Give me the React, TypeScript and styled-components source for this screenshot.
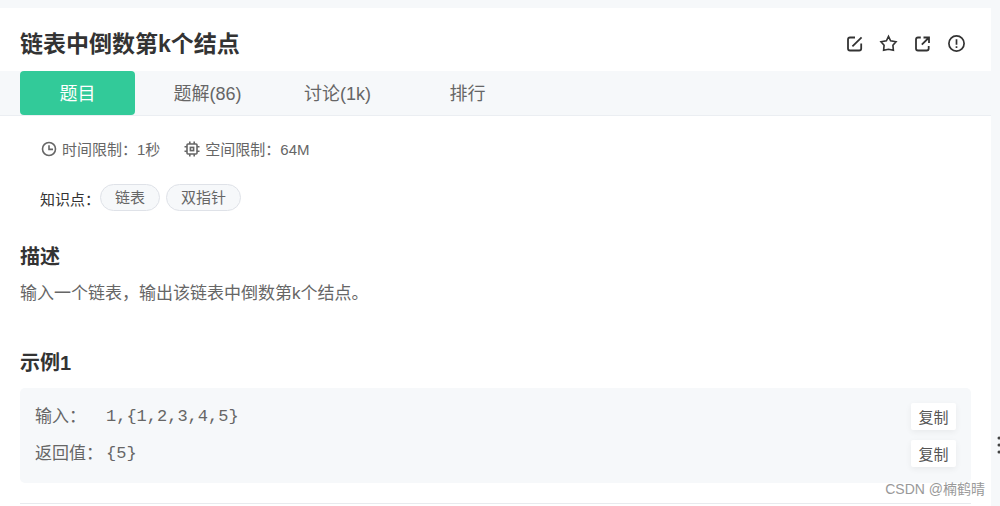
import React from "react";
import styled, { createGlobalStyle } from "styled-components";

const Global = createGlobalStyle`
  * { box-sizing: border-box; }
  body {
    margin: 0;
    background: #f6f8fa;
    color: #333;
    font-family: "Liberation Sans", "Noto Sans CJK SC", sans-serif;
  }
  button { font-family: inherit; cursor: pointer; }
`;

const Page = styled.div`
  display: flex;
  position: relative;
  min-height: 100vh;
  padding-top: 8px;
  overflow: hidden;
`;

const Panel = styled.main`
  flex: 1;
  min-width: 0;
  background: #fff;
`;

const Splitter = styled.div`
  width: 9px;
  padding: 427px 0 0 6px;
  overflow: hidden;
`;

const Dots = styled.svg`
  display: block;
`;

const Header = styled.header`
  display: flex;
  align-items: center;
  justify-content: space-between;
  height: 63px;
  padding: 9px 24px 0 20px;
`;

const Title = styled.h1`
  margin: 0;
  font-size: 23px;
  line-height: 32px;
  font-weight: 700;
`;

const Actions = styled.div`
  display: flex;
  gap: 14px;
`;

const IconButton = styled.button`
  display: flex;
  padding: 0;
  border: 0;
  background: none;
  color: #333;
`;

const Tabs = styled.nav`
  display: flex;
  gap: 15px;
  padding: 0 20px;
  background: #f6f8fa;
  border-bottom: 1px solid #ebeef2;
`;

const Tab = styled.button<{ $active?: boolean }>`
  width: 115px;
  height: 44px;
  padding: 1px 0 0;
  border: 0;
  border-radius: 4px;
  font-size: 18px;
  line-height: 24px;
  background: ${(p) => (p.$active ? "#32ca99" : "transparent")};
  color: ${(p) => (p.$active ? "#fff" : "#666")};
`;

const Content = styled.div`
  padding: 20px 20px 0;
`;

const Limits = styled.div`
  display: flex;
  gap: 23px;
  padding-left: 20px;
  font-size: 15px;
  line-height: 28px;
  color: #666;
`;

const Limit = styled.span`
  display: flex;
  gap: 4px;
`;

const Topics = styled.div`
  display: flex;
  gap: 6px;
  padding: 20px 0 0 20px;
  font-size: 15px;
`;

const TopicLabel = styled.span`
  width: 54px;
  padding-top: 4px;
  line-height: 24px;
  white-space: nowrap;
`;

const Topic = styled.button`
  height: 27px;
  padding: 0 14px;
  border: 1px solid #dfe2e8;
  border-radius: 14px;
  background: #f6f8fa;
  color: #666;
  font-size: 15px;
  line-height: 24px;
`;

const Heading = styled.h2`
  margin: 30px 0 0;
  font-size: 20px;
  line-height: 30px;
  font-weight: 700;
`;

const Description = styled.p`
  margin: 9px 0 41px;
  font-size: 17px;
  line-height: 26px;
  color: #666;
`;

const Example = styled.dl`
  margin: 10px 0 20px;
  padding: 10px 15px 11px;
  border-radius: 5px;
  background: #f6f8fa;
  color: #666;
  font-size: 17px;
  line-height: 24px;
`;

const ExampleRow = styled.div`
  display: flex;
  align-items: center;
  height: 37px;
`;

const Term = styled.dt`
  width: 71px;
  white-space: nowrap;
`;

const Value = styled.dd`
  flex: 1;
  margin: 0;
  font-family: "Liberation Mono", monospace;
`;

const CopyButton = styled.button`
  width: 45px;
  height: 27px;
  padding: 0;
  border: 0;
  border-radius: 2px;
  background: #fff;
  box-shadow: 0 2px 6px rgba(0, 0, 0, 0.06);
  color: #555;
  font-size: 15px;
`;

const Divider = styled.hr`
  height: 1px;
  margin: 0;
  border: 0;
  background: #e8eaee;
`;

const Watermark = styled.span`
  position: absolute;
  right: 15px;
  bottom: 6px;
  font-size: 14px;
  line-height: 22px;
  color: #999;
`;

const MetaIcon = styled.svg`
  margin-top: 4px;
`;

const icon = {
  width: 20,
  height: 20,
  viewBox: "0 0 20 20",
  fill: "none",
  stroke: "currentColor",
  strokeWidth: 1.8,
  "aria-hidden": true,
} as const;

const metaIcon = { ...icon, width: 18, height: 18, viewBox: "0 0 18 18", strokeWidth: 1.6 } as const;

const EditIcon = () => (
  <svg {...icon}>
    <path d="M10 3.5H5Q3 3.5 3 5.5V14.5Q3 16.5 5 16.5H14.2Q16.2 16.5 16.2 14.5V9.5M7.4 12.4L16.6 3.4" />
  </svg>
);

const StarIcon = () => (
  <svg {...icon} strokeWidth={1.6}>
    <path d="M9.5 2.4L11.6 6.8L17 7.7L13.9 11.2L14.4 16.3L9.5 15.2L4.6 16.3L5.1 11.2L2 7.7L7.4 6.8Z" />
  </svg>
);

const ShareIcon = () => (
  <svg {...icon}>
    <path d="M7.8 3.5H5Q3 3.5 3 5.5V14.5Q3 16.5 5 16.5H13.7Q15.7 16.5 15.7 14.5V12M10.5 3.5H16V9M16 3.5L8.8 10.7" />
  </svg>
);

const AlertIcon = () => (
  <svg {...icon} strokeWidth={1.7}>
    <circle cx="9.5" cy="9.5" r="7.6" />
    <path d="M9.5 5.2V10.8M9.5 12.2V13.9" />
  </svg>
);

const ClockIcon = () => (
  <MetaIcon {...metaIcon}>
    <circle cx="9" cy="9" r="6.5" />
    <path d="M9 5.2V9.4H13" />
  </MetaIcon>
);

const ChipIcon = () => (
  <MetaIcon {...metaIcon}>
    <rect x="4" y="4" width="10" height="10" rx="1" />
    <rect x="7.4" y="7.4" width="3.2" height="3.2" />
    <path d="M6.8 1.5V4M11.2 1.5V4M6.8 14V16.5M11.2 14V16.5M1.5 6.8H4M1.5 11.2H4M14 6.8H16.5M14 11.2H16.5" />
  </MetaIcon>
);

const actions = [
  { label: "编辑", Icon: EditIcon },
  { label: "收藏", Icon: StarIcon },
  { label: "分享", Icon: ShareIcon },
  { label: "反馈", Icon: AlertIcon },
];

const tabs = ["题目", "题解(86)", "讨论(1k)", "排行"];

const example = [
  { term: "输入：", value: "1,{1,2,3,4,5}" },
  { term: "返回值：", value: "{5}" },
];

export default function App() {
  return (
    <>
      <Global />
      <Page lang="zh-CN">
        <Panel>
          <Header>
            <Title>链表中倒数第k个结点</Title>
            <Actions>
              {actions.map(({ label, Icon }) => (
                <IconButton key={label} aria-label={label}>
                  <Icon />
                </IconButton>
              ))}
            </Actions>
          </Header>
          <Tabs>
            {tabs.map((tab, i) => (
              <Tab key={tab} $active={i === 0}>
                {tab}
              </Tab>
            ))}
          </Tabs>
          <Content>
            <Limits>
              <Limit>
                <ClockIcon />
                时间限制：1秒
              </Limit>
              <Limit>
                <ChipIcon />
                空间限制：64M
              </Limit>
            </Limits>
            <Topics>
              <TopicLabel>知识点：</TopicLabel>
              <Topic>链表</Topic>
              <Topic>双指针</Topic>
            </Topics>
            <Heading>描述</Heading>
            <Description>输入一个链表，输出该链表中倒数第k个结点。</Description>
            <Heading>示例1</Heading>
            <Example>
              {example.map(({ term, value }) => (
                <ExampleRow key={term}>
                  <Term>{term}</Term>
                  <Value>{value}</Value>
                  <CopyButton>复制</CopyButton>
                </ExampleRow>
              ))}
            </Example>
            <Divider />
          </Content>
        </Panel>
        <Splitter>
          <Dots width="8" height="20" fill="#444" aria-hidden="true">
            <circle cx="2" cy="3" r="1.5" />
            <circle cx="2" cy="10" r="1.5" />
            <circle cx="2" cy="17" r="1.5" />
          </Dots>
        </Splitter>
        <Watermark>CSDN @楠鹤晴</Watermark>
      </Page>
    </>
  );
}
